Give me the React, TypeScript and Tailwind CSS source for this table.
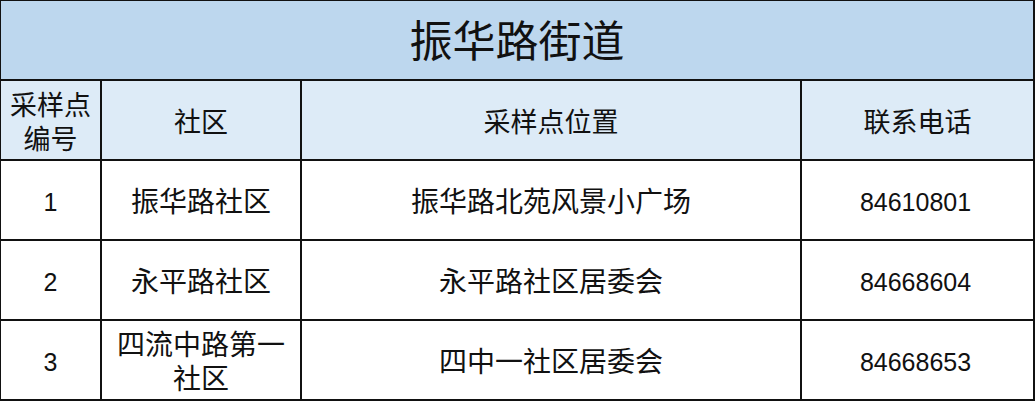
export default function App() {
  const rows = [
    { no: "1", community: "振华路社区", place: "振华路北苑风景小广场", phone: "84610801" },
    { no: "2", community: "永平路社区", place: "永平路社区居委会", phone: "84668604" },
    { no: "3", community: "四流中路第一社区", place: "四中一社区居委会", phone: "84668653" },
  ]

  const cell = "flex items-center justify-center text-center bg-white text-[#111] pt-[6px]"
  const head = "flex items-center justify-center text-center bg-[#ddebf7] text-[#111] pt-[6px]"

  return (
    <div className="w-[1035px] h-[402px] bg-white font-['Liberation_Sans','Noto_Sans_CJK_SC',sans-serif]">
      <div className="grid grid-cols-[99px_198px_498px_231px] grid-rows-[78px_78px_78px_78px_78px] gap-[2px] bg-[#111] pt-[1px] pl-[1px] pr-[2px] pb-[2px]">
        <div className="col-span-4 flex items-center justify-center bg-[#bdd7ee] text-[43px] text-[#111] pt-[4px]">
          振华路街道
        </div>

        <div className={`${head} text-[27px] leading-[34px] px-[4px]`}>采样点编号</div>
        <div className={`${head} text-[27px]`}>社区</div>
        <div className={`${head} text-[27px]`}>采样点位置</div>
        <div className={`${head} text-[27px]`}>联系电话</div>

        {rows.map((r) => (
          <>
            <div key={r.no + "a"} className={`${cell} text-[25px]`}>{r.no}</div>
            <div key={r.no + "b"} className={`${cell} text-[28px] leading-[34px] px-[14px]`}>{r.community}</div>
            <div key={r.no + "c"} className={`${cell} text-[28px]`}>{r.place}</div>
            <div key={r.no + "d"} className={`${cell} text-[25px] pr-[4px]`}>{r.phone}</div>
          </>
        ))}
      </div>
    </div>
  )
}
